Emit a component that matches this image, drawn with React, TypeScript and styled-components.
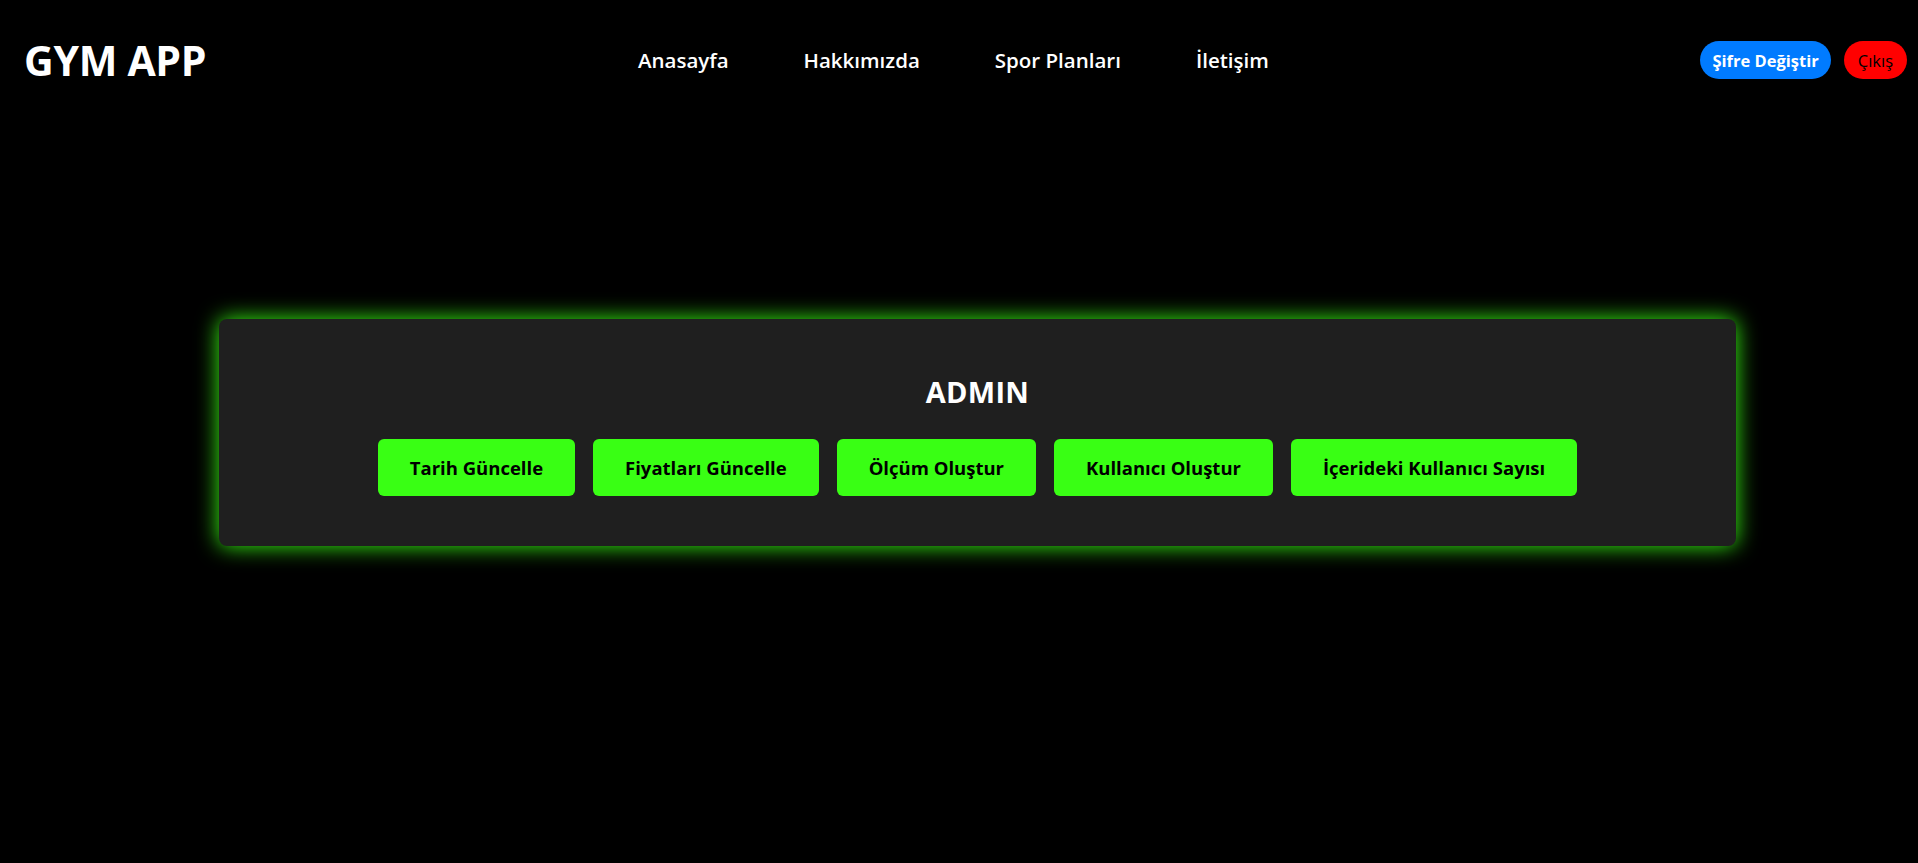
import React from "react";
import styled, { createGlobalStyle } from "styled-components";

const GlobalStyle = createGlobalStyle`
  html, body {
    margin: 0;
    padding: 0;
    background: #000000;
    font-family: "Open Sans", "Noto Sans", "DejaVu Sans", sans-serif;
    color: #ffffff;
  }
  * { box-sizing: border-box; }
`;

const Page = styled.div`
  min-height: 863px;
  background: #000000;
  display: flex;
  flex-direction: column;
`;

const Header = styled.header`
  height: 120px;
  display: flex;
  align-items: center;
  justify-content: space-between;
  padding: 0 11px 0 24px;
`;

const Logo = styled.h1`
  margin: 0;
  font-size: 41px;
  font-weight: 700;
  line-height: 1;
  color: #ffffff;
  letter-spacing: -0.3px;
`;

const Nav = styled.nav`
  display: flex;
  align-items: center;
  gap: 75px;
`;

const NavLink = styled.a`
  font-size: 20.5px;
  font-weight: 600;
  color: #ffffff;
  text-decoration: none;
  cursor: pointer;
`;

const Actions = styled.div`
  display: flex;
  align-items: center;
  gap: 13px;
`;

const PillButton = styled.button<{ $variant: "blue" | "red" }>`
  height: 38px;
  border: none;
  border-radius: 19px;
  padding: 0 ${(p) => (p.$variant === "blue" ? "12px" : "14px")};
  font-family: inherit;
  font-size: 16.5px;
  font-weight: ${(p) => (p.$variant === "blue" ? 700 : 400)};
  background: ${(p) => (p.$variant === "blue" ? "#007bff" : "#ff0000")};
  color: ${(p) => (p.$variant === "blue" ? "#ffffff" : "#000000")};
  cursor: pointer;
`;

const Main = styled.main`
  display: flex;
  padding: 199px 182px 0 219px;
`;

const Card = styled.section`
  flex: 1;
  height: 227px;
  background: #1f1f1f;
  border-radius: 8px;
  box-shadow: 0 0 22px #39ff14;
  display: flex;
  flex-direction: column;
  align-items: center;
  padding-top: 55px;
`;

const Title = styled.h2`
  margin: 0 0 29px;
  font-size: 29px;
  line-height: 36px;
  font-weight: 700;
  color: #ffffff;
  letter-spacing: 0.3px;
`;

const ButtonRow = styled.div`
  display: flex;
  gap: 18px;
`;

const ActionButton = styled.button`
  height: 57px;
  padding: 0 32px;
  border: none;
  border-radius: 6px;
  background: #39ff14;
  color: #000000;
  font-family: inherit;
  font-size: 18.5px;
  font-weight: 700;
  cursor: pointer;
`;

const navItems = ["Anasayfa", "Hakkımızda", "Spor Planları", "İletişim"];
const actions = [
  "Tarih Güncelle",
  "Fiyatları Güncelle",
  "Ölçüm Oluştur",
  "Kullanıcı Oluştur",
  "İçerideki Kullanıcı Sayısı",
];

export default function App() {
  return (
    <>
      <GlobalStyle />
      <Page>
        <Header>
          <Logo>GYM APP</Logo>
          <Nav>
            {navItems.map((n) => (
              <NavLink key={n}>{n}</NavLink>
            ))}
          </Nav>
          <Actions>
            <PillButton $variant="blue">Şifre Değiştir</PillButton>
            <PillButton $variant="red">Çıkış</PillButton>
          </Actions>
        </Header>
        <Main>
          <Card>
            <Title>ADMIN</Title>
            <ButtonRow>
              {actions.map((a) => (
                <ActionButton key={a}>{a}</ActionButton>
              ))}
            </ButtonRow>
          </Card>
        </Main>
      </Page>
    </>
  );
}
